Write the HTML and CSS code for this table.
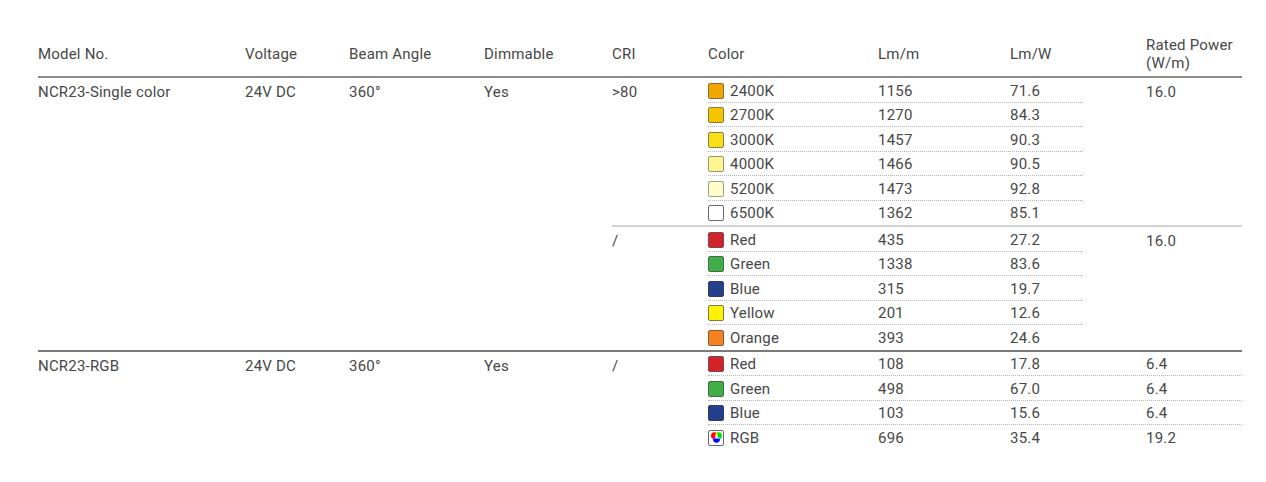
FILE: index.html
```html
<!DOCTYPE html>
<html>
<head>
<meta charset="utf-8">
<link rel="stylesheet" href="styles.css">
</head>
<body>
<div class="spec">
  <div class="thead">
    <div class="c model">Model No.</div>
    <div class="c volt">Voltage</div>
    <div class="c beam">Beam Angle</div>
    <div class="c dim">Dimmable</div>
    <div class="c cri">CRI</div>
    <div class="c color">Color</div>
    <div class="c lmm">Lm/m</div>
    <div class="c lmw">Lm/W</div>
    <div class="c rated">Rated Power<br>(W/m)</div>
  </div>

  <div class="group">
    <div class="c model lead">NCR23-Single color</div>
    <div class="c volt lead">24V DC</div>
    <div class="c beam lead">360°</div>
    <div class="c dim lead">Yes</div>
    <div class="subs">
      <div class="sub">
        <div class="c cri lead">&gt;80</div>
        <div class="rows">
          <div class="row"><div class="c color"><span class="sw sw-2400"></span>2400K</div><div class="c lmm">1156</div><div class="c lmw">71.6</div></div>
          <div class="row"><div class="c color"><span class="sw sw-2700"></span>2700K</div><div class="c lmm">1270</div><div class="c lmw">84.3</div></div>
          <div class="row"><div class="c color"><span class="sw sw-3000"></span>3000K</div><div class="c lmm">1457</div><div class="c lmw">90.3</div></div>
          <div class="row"><div class="c color"><span class="sw sw-4000"></span>4000K</div><div class="c lmm">1466</div><div class="c lmw">90.5</div></div>
          <div class="row"><div class="c color"><span class="sw sw-5200"></span>5200K</div><div class="c lmm">1473</div><div class="c lmw">92.8</div></div>
          <div class="row"><div class="c color"><span class="sw sw-6500"></span>6500K</div><div class="c lmm">1362</div><div class="c lmw">85.1</div></div>
        </div>
        <div class="c rated lead">16.0</div>
      </div>
      <div class="sub">
        <div class="c cri lead">/</div>
        <div class="rows">
          <div class="row"><div class="c color"><span class="sw sw-red"></span>Red</div><div class="c lmm">435</div><div class="c lmw">27.2</div></div>
          <div class="row"><div class="c color"><span class="sw sw-green"></span>Green</div><div class="c lmm">1338</div><div class="c lmw">83.6</div></div>
          <div class="row"><div class="c color"><span class="sw sw-blue"></span>Blue</div><div class="c lmm">315</div><div class="c lmw">19.7</div></div>
          <div class="row"><div class="c color"><span class="sw sw-yellow"></span>Yellow</div><div class="c lmm">201</div><div class="c lmw">12.6</div></div>
          <div class="row"><div class="c color"><span class="sw sw-orange"></span>Orange</div><div class="c lmm">393</div><div class="c lmw">24.6</div></div>
        </div>
        <div class="c rated lead">16.0</div>
      </div>
    </div>
  </div>

  <div class="group last">
    <div class="c model lead">NCR23-RGB</div>
    <div class="c volt lead">24V DC</div>
    <div class="c beam lead">360°</div>
    <div class="c dim lead">Yes</div>
    <div class="subs">
      <div class="sub">
        <div class="c cri lead">/</div>
        <div class="rows wide">
          <div class="row"><div class="c color"><span class="sw sw-red"></span>Red</div><div class="c lmm">108</div><div class="c lmw">17.8</div><div class="c rated">6.4</div></div>
          <div class="row"><div class="c color"><span class="sw sw-green"></span>Green</div><div class="c lmm">498</div><div class="c lmw">67.0</div><div class="c rated">6.4</div></div>
          <div class="row"><div class="c color"><span class="sw sw-blue"></span>Blue</div><div class="c lmm">103</div><div class="c lmw">15.6</div><div class="c rated">6.4</div></div>
          <div class="row"><div class="c color"><span class="sw sw-rgb"><svg class="rgb-icon" viewBox="0 0 14 14" width="13" height="13"><g class="rgb-mix"><circle cx="4.8" cy="5" r="3.7" fill="#ff0000"/><circle class="scr" cx="9.2" cy="5" r="3.7" fill="#00e000"/><circle class="scr" cx="7" cy="9" r="3.7" fill="#0000ff"/></g></svg></span>RGB</div><div class="c lmm">696</div><div class="c lmw">35.4</div><div class="c rated">19.2</div></div>
        </div>
      </div>
    </div>
  </div>
</div>
</body>
</html>
```

FILE: styles.css
```css
html, body {
  margin: 0;
  padding: 0;
  background: #ffffff;
}

body {
  font-family: Roboto, "Liberation Sans", sans-serif;
  font-size: 15px;
  letter-spacing: 0.2px;
  color: #474747;
}

.spec {
  width: 1204px;
  margin: 32px 0 0 38px;
}

.thead {
  display: flex;
  align-items: center;
  height: 44px;
  border-bottom: 2px solid #8c8c8c;
}

.thead .c {
  line-height: 18px;
}

.group {
  display: flex;
  border-bottom: 2px solid #7a7a7a;
}

.group.last {
  border-bottom: none;
}

.c {
  box-sizing: border-box;
  flex: none;
  white-space: nowrap;
}

.lead {
  line-height: 24px;
  padding-top: 2px;
}

.model { width: 207px; }
.volt  { width: 104px; }
.beam  { width: 135px; }
.dim   { width: 128px; }
.cri   { width: 96px; }
.color { width: 170px; display: flex; align-items: center; }
.lmm   { width: 132px; }
.lmw   { width: 73px; }
.rated { width: 159px; padding-left: 63px; }

.subs {
  display: flex;
  flex-direction: column;
  flex: 1;
}

.sub {
  display: flex;
  border-bottom: 2px solid #d2d2d2;
}

.sub:last-child {
  border-bottom: none;
}

.rows {
  display: flex;
  flex-direction: column;
  width: 375px;
  flex: none;
}

.rows.wide {
  width: 534px;
}

.row {
  display: flex;
  align-items: center;
  box-sizing: border-box;
  height: 24.5px;
  padding-top: 2px;
  border-bottom: 1px dotted #b4b4b4;
}

.row:last-child {
  border-bottom: 1px solid transparent;
}

.sw {
  box-sizing: border-box;
  display: inline-flex;
  align-items: center;
  justify-content: center;
  width: 16px;
  height: 16px;
  margin-right: 6px;
  border: 1px solid #6e6e6e;
  border-radius: 2px;
}

.rgb-mix {
  isolation: isolate;
}

.rgb-mix .scr {
  mix-blend-mode: screen;
}

.sw-2400 { background: #f0a800; border-color: #8a6a2a; }
.sw-2700 { background: #f5c500; border-color: #8a7a3a; }
.sw-3000 { background: #f8df1a; border-color: #8a8040; }
.sw-4000 { background: #fdf591; border-color: #9a9670; }
.sw-5200 { background: #fefcc8; border-color: #a09e86; }
.sw-6500 { background: #ffffff; border-color: #6a6a6a; }
.sw-red { background: #d4222a; border-color: #7a4a4a; }
.sw-green { background: #3fae49; border-color: #4a6a4a; }
.sw-blue { background: #253f8f; border-color: #3a3a5a; }
.sw-yellow { background: #fff200; border-color: #7a7a4a; }
.sw-orange { background: #f58220; border-color: #8a5a3a; }
.sw-rgb { background: #ffffff; border-color: #6a6a6a; }
```
